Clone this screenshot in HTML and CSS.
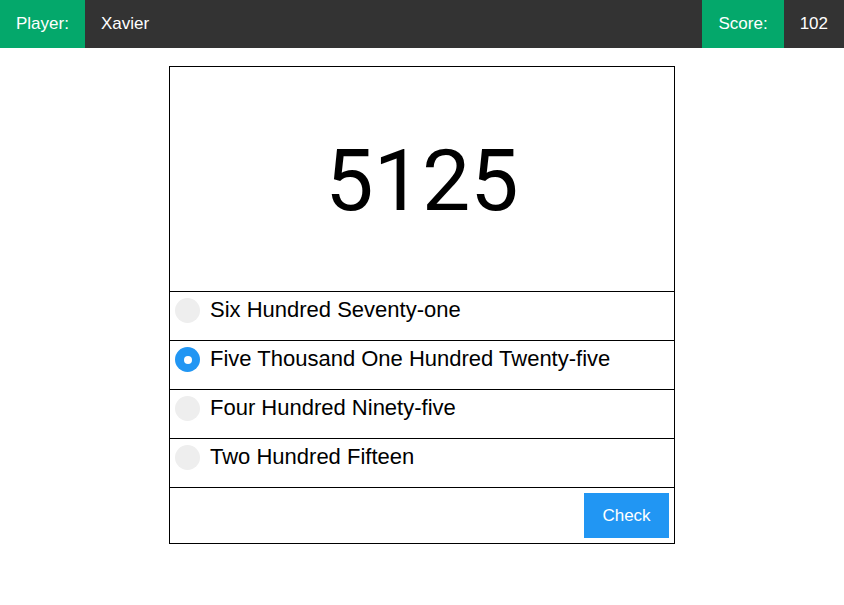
FILE: index.html
```html
<!DOCTYPE html>
<html>
<head>
<meta charset="utf-8">
<link rel="stylesheet" href="styles.css">
</head>
<body>
<header class="topbar">
  <div class="cell label">Player:</div>
  <div class="cell name">Xavier</div>
  <div class="cell label">Score:</div>
  <div class="cell value">102</div>
</header>
<main class="card">
  <div class="number">5125</div>
  <label class="option"><span class="radio"></span><span class="text">Six Hundred Seventy-one</span></label>
  <label class="option"><span class="radio checked"></span><span class="text">Five Thousand One Hundred Twenty-five</span></label>
  <label class="option"><span class="radio"></span><span class="text">Four Hundred Ninety-five</span></label>
  <label class="option"><span class="radio"></span><span class="text">Two Hundred Fifteen</span></label>
  <div class="footer"><button class="check">Check</button></div>
</main>
</body>
</html>
```
FILE: styles.css
```css
* { box-sizing: border-box; }
body {
  margin: 0;
  font-family: "Liberation Sans", Arial, sans-serif;
  background: #fff;
  color: #000;
}
.topbar {
  display: flex;
  height: 48px;
  background: #333;
  color: #fff;
  font-size: 17px;
  line-height: 48px;
}
.cell { padding: 0 16px; }
.label { background: #04a86b; }
.name { flex: 1; }
.card {
  width: 506px;
  margin: 18px auto 0;
  border: 1px solid #000;
}
.number {
  height: 225px;
  display: flex;
  align-items: center;
  justify-content: center;
  padding-top: 2px;
  font-family: Roboto, sans-serif;
  font-size: 86px;
  border-bottom: 1px solid #000;
}
.option {
  display: flex;
  align-items: flex-start;
  height: 49px;
  padding: 6px 0 0 5px;
  border-bottom: 1px solid #000;
  font-size: 22px;
}
.radio {
  width: 25px;
  height: 25px;
  border-radius: 50%;
  background: #eee;
  flex: none;
  position: relative;
}
.radio.checked { background: #2196f3; }
.radio.checked::after {
  content: "";
  position: absolute;
  left: 8.5px;
  top: 8.5px;
  width: 8px;
  height: 8px;
  border-radius: 50%;
  background: #fff;
}
.text { margin-left: 10px; line-height: 24px; }
.footer {
  display: flex;
  justify-content: flex-end;
  padding: 5px;
}
.check {
  width: 85px;
  height: 45px;
  padding-top: 2px;
  border: none;
  background: #2196f3;
  color: #fff;
  font-family: "Liberation Sans", Arial, sans-serif;
  font-size: 17px;
  cursor: pointer;
}
```
